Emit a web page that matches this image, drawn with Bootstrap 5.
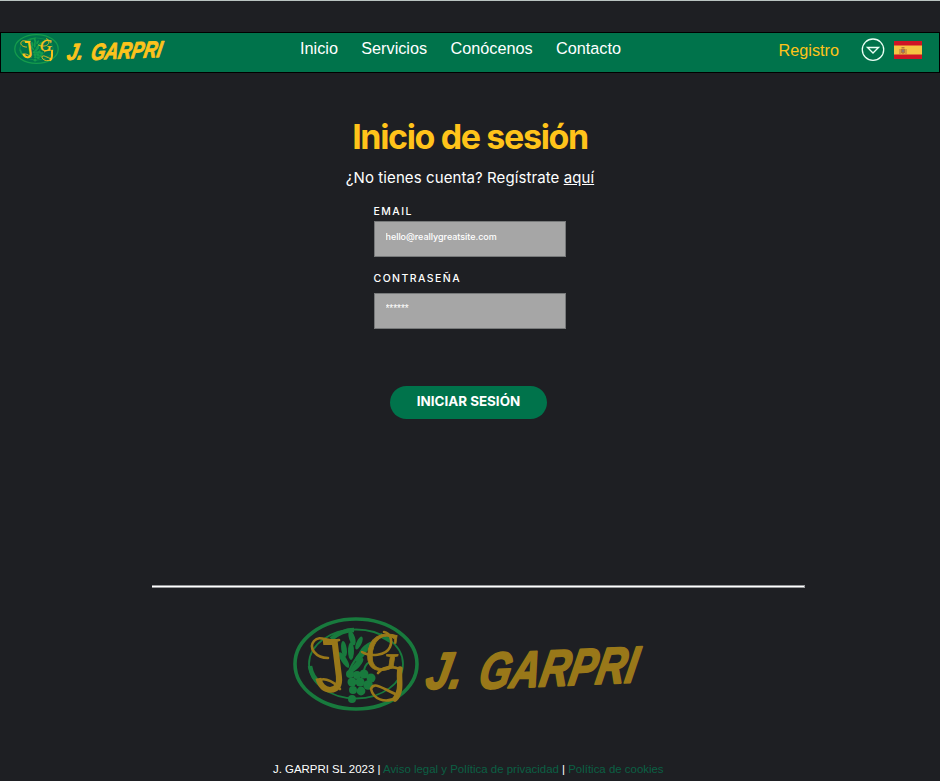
<!DOCTYPE html>
<html lang="es">
<head>
<meta charset="utf-8">
<meta name="viewport" content="width=device-width, initial-scale=1">
<title>J. GARPRI - Inicio de sesión</title>
<link href="https://cdn.jsdelivr.net/npm/bootstrap@5.3.0/dist/css/bootstrap.min.css" rel="stylesheet">
<style>
  :root { --brand-green: #00734b; --brand-gold: #ffc31a; }
  body { background: #1e1f23; color: #fff; font-family: "Liberation Sans", Arial, sans-serif; height: 781px; overflow: hidden; border-top: 1px solid #bac4c1; }
  .site-bar { margin-top: 31px; height: 41px; background: var(--brand-green); border: 1px solid #000; }
  .site-bar a { font-size: 16.25px; line-height: 24px; white-space: nowrap; }
  .bar-side { width: 299px; }
  .bar-links { width: 321px; padding-top: 3px; margin-right: 19px; }
  .gold { color: var(--brand-gold); }
  .logo-bright { --leaf: #159c4c; --ink: #fcc31c; }
  .logo-muted { --leaf: #187a3d; --ink: #997819; }
  .brand-mark { padding-left: 12px; }
  .brand-word { margin-left: 5px; margin-top: 4px; }
  .register { margin: 5px 22px 0 0; }
  .lang { margin: 5px 1px 0 0; }
  .bar-end { padding-right: 17px; }
  .panel { font-family: Inter, "Open Sans", sans-serif; }
  .panel h1 { margin-top: 42px; font-size: 34px; font-weight: 700; line-height: 44px; letter-spacing: -1.36px; }
  .intro { margin-top: 7px; font-size: 15px; line-height: 24px; letter-spacing: .09px; }
  .login { width: 193px; margin-top: 14px; }
  .login label { display: block; font-size: 10.5px; font-weight: 500; line-height: 16px; letter-spacing: 1.43px; }
  .login .form-control { width: 192px; height: 36px; margin-top: 1px; padding: 0 11px 5px; background: #a6a6a6; border: 1px solid #77797a; color: #fff; font-size: 9px; font-weight: 500; letter-spacing: -.03px; }
  .second { margin-top: 14px; }
  .second .form-control { margin-top: 6px; }
  .login .pass { padding-bottom: 5px; font-family: "Liberation Sans", Arial, sans-serif; font-size: 10px; }
  .send { width: 157px; height: 33px; margin: 57px 3px 0 0; padding: 0 0 2px; background: var(--brand-green); color: #fff; font-size: 13.4px; font-weight: 700; }
  .divider { width: 653px; height: 3px; margin: 166px 0 0 152px; background: #fff; border: 1px solid #96979a; border-width: 1px 1px 1px 0; opacity: 1; }
  .foot-logo { margin: 26px 0 0 290px; }
  .legal { margin: 47px 0 0 273px; font-size: 11.45px; line-height: 16px; white-space: nowrap; }
  .legal a { color: #0b6044; }
</style>
</head>
<body>
<svg class="d-none" xmlns="http://www.w3.org/2000/svg">
  <symbol id="emblem" viewBox="0 0 132 100" preserveAspectRatio="none">
    <g fill="none" stroke="var(--leaf)">
      <ellipse cx="66" cy="50" rx="61" ry="45" stroke-width="3.6"/>
      <ellipse cx="66" cy="50" rx="47" ry="34.5" stroke-width="1.8"/>
      <path d="M41 25 Q52 16 64 16 M20 52 Q22 64 31 70 M90 21 Q96 24 101 27" stroke-width="4.5"/>
      <path d="M58 60 Q65 40 82 31 M74 56 Q76 47 83 48" stroke-width="2"/>
    </g>
    <g fill="var(--leaf)">
      <ellipse cx="62" cy="24" rx="3" ry="7.5" transform="rotate(-18 62 24)"/>
      <ellipse cx="54" cy="35" rx="2.8" ry="8" transform="rotate(-8 54 35)"/>
      <ellipse cx="54" cy="46" rx="2.8" ry="9" transform="rotate(-32 54 46)"/>
      <ellipse cx="61" cy="37" rx="3" ry="9"/>
      <ellipse cx="69" cy="29" rx="2.6" ry="7" transform="rotate(25 69 29)"/>
      <ellipse cx="76" cy="34" rx="3" ry="9" transform="rotate(48 76 34)"/>
      <ellipse cx="71" cy="41" rx="3" ry="8.5" transform="rotate(42 71 41)"/>
      <ellipse cx="67" cy="51" rx="3" ry="9" transform="rotate(42 67 51)"/>
      <circle cx="60" cy="60" r="4"/><circle cx="67" cy="61" r="4"/><circle cx="74" cy="60" r="4.500"/><circle cx="81" cy="64" r="4.500"/>
      <circle cx="62" cy="68" r="4.500"/><circle cx="70" cy="68" r="4.500"/><circle cx="78" cy="71" r="4.800"/><circle cx="63" cy="76" r="4"/>
      <circle cx="71" cy="77" r="4.400"/><circle cx="62" cy="85" r="4"/>
    </g>
    <g fill="var(--ink)" stroke="var(--ink)">
      <text transform="translate(26 78) skewX(7) scale(.85 1)" font-family="Liberation Sans, Arial, sans-serif" font-size="77" stroke="none">J</text>
      <text transform="translate(75 56) scale(.86 1)" font-family="Liberation Serif, Times New Roman, serif" font-style="italic" font-size="55" stroke-width=".8">G</text>
    </g>
    <g fill="none" stroke="var(--ink)" stroke-width="2.6" stroke-linecap="round">
      <path d="M38 44 C26 44 18 34 24 27 C30 20 38 29 49 26"/>
      <path d="M30 70 C28 61 43 66 50 75"/>
      <path d="M72 38 C80 43 96 42 100 33 C103 26 100 19 94 18"/>
      <path d="M108 83 C94 91 83 84 81 75 C84 66 96 77 108 81 M88 59 C94 52 102 52 110 55"/>
      <path d="M110 55 C108 64 113 76 105 85" stroke-width="5.500"/>
    </g>
  </symbol>
  <symbol id="wordmark" viewBox="0 0 226 60">
    <g fill="var(--ink)" stroke="var(--ink)" stroke-width="2" stroke-linejoin="round" font-family="Liberation Sans, Arial, sans-serif" font-weight="700" font-style="italic" font-size="51">
      <text transform="translate(2 51) rotate(-2) skewX(-13)" textLength="36" lengthAdjust="spacingAndGlyphs">J.</text>
      <text transform="translate(55 51) rotate(-2.4) skewX(-13)" textLength="158" lengthAdjust="spacingAndGlyphs">GARPRI</text>
    </g>
  </symbol>
</svg>

<nav class="site-bar d-flex justify-content-between">
  <div class="bar-side d-flex align-items-start logo-bright brand-mark">
    <svg width="47" height="32"><use href="#emblem"/></svg>
    <svg class="brand-word" width="102" height="27"><use href="#wordmark"/></svg>
  </div>
  <div class="bar-links d-flex justify-content-between">
    <a class="text-white text-decoration-none" href="#">Inicio</a>
    <a class="text-white text-decoration-none" href="#">Servicios</a>
    <a class="text-white text-decoration-none" href="#">Conócenos</a>
    <a class="text-white text-decoration-none" href="#">Contacto</a>
  </div>
  <div class="bar-side bar-end d-flex justify-content-end align-items-start">
    <a class="register gold text-decoration-none" href="#">Registro</a>
    <svg class="lang" width="24" height="24" viewBox="0 0 24 24" fill="none" stroke="#eafff5"><circle cx="12" cy="11.700" r="10.700" stroke-width="1.300"/><path d="M6.500 9.500h11L12 15z" stroke-width="1.400"/></svg>
    <svg class="ms-2 mt-2" width="28" height="18" viewBox="0 0 28 18"><path fill="#cf1525" d="M0 0h28v18H0z"/><path fill="#f5c443" d="M0 4.500h28v9H0z"/><path fill="#b8743e" d="M5.500 8h1v5h-1zM11.500 8h1v5h-1zM7 8h4v4l-2 1-2-1zM7.500 6h3v1.500h-3z"/><path fill="#8b7a76" d="M8 9h2v2H8z"/></svg>
  </div>
</nav>

<main class="panel d-flex flex-column align-items-center">
  <h1 class="gold mb-0">Inicio de sesión</h1>
  <p class="intro mb-0">¿No tienes cuenta? Regístrate <a class="text-white" href="#">aquí</a></p>
  <form class="login">
    <label for="email">EMAIL</label>
    <input class="form-control rounded-0" id="email" type="text" value="hello@reallygreatsite.com">
    <div class="second">
      <label for="pass">CONTRASEÑA</label>
      <input class="form-control rounded-0 pass" id="pass" type="text" value="******">
    </div>
  </form>
  <button class="send btn rounded-pill border-0" type="button">INICIAR SESIÓN</button>
</main>

<footer>
  <hr class="divider">
  <div class="foot-logo logo-muted d-flex">
    <svg width="132" height="100"><use href="#emblem"/></svg>
    <svg class="mt-4" width="226" height="60"><use href="#wordmark"/></svg>
  </div>
  <p class="legal mb-0">J. GARPRI SL 2023 | <a class="text-decoration-none" href="#">Aviso legal y Política de privacidad</a> | <a class="text-decoration-none" href="#">Política de cookies</a></p>
</footer>
<script src="https://cdn.jsdelivr.net/npm/bootstrap@5.3.0/dist/js/bootstrap.bundle.min.js"></script>
</body>
</html>
